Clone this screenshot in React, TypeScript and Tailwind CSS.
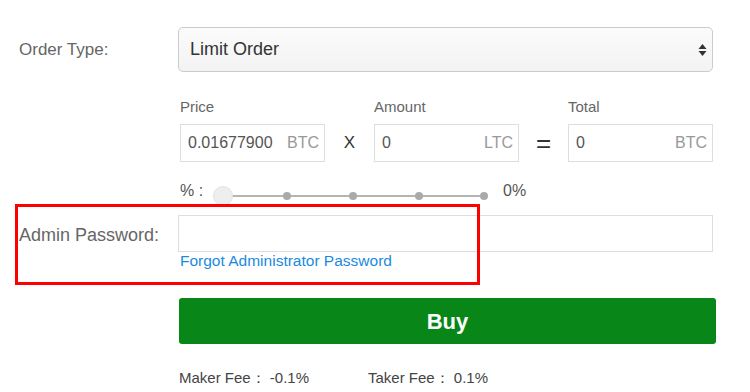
import { ReactNode } from "react";

const font = { fontFamily: '"Liberation Sans", Arial, Helvetica, sans-serif' };

const UnitInput = ({ value, unit }: { value: string; unit: string }) => (
  <div className="flex h-[38px] w-[145px] items-center justify-between border border-[#dedede] bg-white pl-[7px] pr-[5px] text-[16px]">
    <span className="text-[#555]">{value}</span>
    <span className="text-[#999]">{unit}</span>
  </div>
);

const Field = ({ label, children }: { label: string; children: ReactNode }) => (
  <div className="flex w-[145px] flex-col">
    <span className="h-[18px] text-[15px] leading-[18px] text-[#666]">{label}</span>
    <div className="mt-[8px]">{children}</div>
  </div>
);

const Op = ({ children, size }: { children: ReactNode; size: string }) => (
  <div className={`flex h-[38px] w-[49px] items-center justify-center text-[#333] ${size}`}>
    {children}
  </div>
);

const Dot = ({ gap }: { gap: string }) => (
  <div className={`relative h-[8px] w-[8px] rounded-full bg-[#aaaaaa] ${gap}`} />
);

export default function App() {
  return (
    <div className="relative h-[392px] w-[750px] overflow-hidden bg-white" style={font}>
      <div className="flex flex-col pl-[19px] pt-[27px]">
        {/* order type */}
        <div className="flex h-[45px] items-center">
          <span className="w-[159px] text-[17px] text-[#666]">Order Type:</span>
          <div className="flex h-[45px] w-[535px] items-center justify-between rounded-[5px] border border-[#cbcbcb] bg-gradient-to-b from-[#fbfbfb] to-[#f3f3f3] pl-[11px] pr-[5px]">
            <span className="text-[18px] text-[#333]">Limit Order</span>
            <svg width="9" height="14" viewBox="0 0 9 14">
              <path d="M4.5 1 L8.5 6 L0.5 6 Z" fill="#333" />
              <path d="M4.5 13 L8.5 8 L0.5 8 Z" fill="#333" />
            </svg>
          </div>
        </div>

        {/* price x amount = total */}
        <div className="ml-[161px] mt-[26px] flex items-end">
          <Field label="Price">
            <UnitInput value="0.01677900" unit="BTC" />
          </Field>
          <Op size="text-[17px]">X</Op>
          <Field label="Amount">
            <UnitInput value="0" unit="LTC" />
          </Field>
          <Op size="text-[26px] font-light">=</Op>
          <Field label="Total">
            <UnitInput value="0" unit="BTC" />
          </Field>
        </div>

        {/* slider */}
        <div className="ml-[161px] mt-[24px] flex h-[20px] items-center">
          <span className="mb-[10px] w-[33px] text-[16px] text-[#555]">% :</span>
          <div className="relative flex h-[20px] w-[275px] items-center">
            <div className="absolute left-[10px] right-[4px] h-[2px] bg-[#b5b5b5]" />
            <div className="relative h-[20px] w-[20px] rounded-full border border-[#e2e2e2] bg-[#eeeeee]" />
            <Dot gap="ml-[50px]" />
            <Dot gap="ml-[58px]" />
            <Dot gap="ml-[58px]" />
            <Dot gap="ml-[57px]" />
          </div>
          <span className="mb-[10px] ml-[15px] text-[16px] text-[#555]">0%</span>
        </div>

        {/* admin password */}
        <div className="mt-[9px] flex">
          <div className="flex h-[37px] w-[159px] items-center pt-[3px] text-[18px] text-[#666]">
            Admin Password:
          </div>
          <div className="flex flex-col">
            <div className="h-[37px] w-[535px] border border-[#dedede] bg-white" />
            <a className="ml-[2px] h-[18px] text-[15.5px] leading-[18px] text-[#1a8ae0]">
              Forgot Administrator Password
            </a>
          </div>
        </div>

        {/* buy */}
        <button className="ml-[160px] mt-[28px] flex h-[46px] w-[537px] items-center justify-center rounded-[3px] bg-[#088618] text-[22px] font-bold text-white">
          Buy
        </button>

        {/* fees */}
        <div className="ml-[160px] mt-[25px] flex h-[18px] text-[15px] leading-[18px] text-[#444]">
          <span className="w-[189px]">Maker Fee： -0.1%</span>
          <span>Taker Fee： 0.1%</span>
        </div>
      </div>

      {/* annotation */}
      <div className="absolute left-[15px] top-[204px] h-[81px] w-[465px] border-[3px] border-[#ff0000]" />
    </div>
  );
}
